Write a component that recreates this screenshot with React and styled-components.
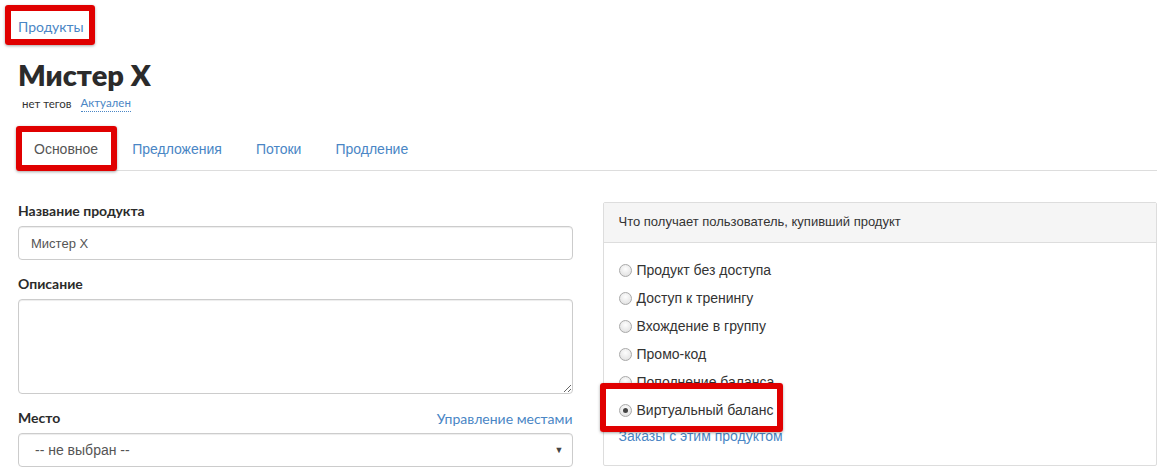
import React from 'react';
import styled, { createGlobalStyle } from 'styled-components';

const GlobalStyle = createGlobalStyle`
  html, body {
    margin: 0;
    padding: 0;
    background: #fff;
  }
  body {
    font-family: "Liberation Sans", Arial, sans-serif;
    font-size: 14px;
    color: #333;
  }
  * { box-sizing: border-box; }
`;

const Page = styled.div`
  padding: 17px 14px 0 18px;
`;

// red annotation frame drawn over the marked element
const Marked = styled.span`
  position: relative;
  display: inline-block;
  align-self: flex-start;
  &::after {
    content: "";
    position: absolute;
    top: ${p => p.$t}px;
    left: ${p => p.$l}px;
    right: ${p => p.$r}px;
    bottom: ${p => p.$b}px;
    border: 6px solid #e00000;
    border-radius: 3px;
    box-shadow: 0 1px 3px rgba(0, 0, 0, 0.35);
    pointer-events: none;
  }
`;

const Crumb = styled.a`
  font-family: Lato, "Open Sans", sans-serif;
  font-size: 14px;
  line-height: 20px;
  color: #4a86c5;
  text-decoration: none;
`;

const Title = styled.h1`
  margin: 21px 0 0;
  font-family: Lato, "Open Sans", sans-serif;
  font-weight: 800;
  font-size: 29px;
  line-height: 34px;
  color: #2b2b2b;
`;

const Tags = styled.div`
  margin-top: 4px;
  display: flex;
  gap: 9px;
  padding-left: 4px;
  font-family: Lato, "Open Sans", sans-serif;
  font-size: 11.5px;
  line-height: 16px;
`;

const Status = styled.span`
  color: #4a86c5;
  border-bottom: 1px dotted #4a86c5;
  line-height: 14px;
`;

const Tabs = styled.nav`
  margin-top: 16px;
  display: flex;
  border-bottom: 1px solid #ddd;
`;

const Tab = styled.a`
  display: block;
  padding: 10px 15px 11px;
  margin-right: 2px;
  margin-bottom: -1px;
  line-height: 20px;
  font-size: 14px;
  text-decoration: none;
  color: ${p => (p.$active ? '#555' : '#4a86c5')};
  border: 1px solid ${p => (p.$active ? '#ddd' : 'transparent')};
  border-bottom-color: ${p => (p.$active ? '#fff' : 'transparent')};
  border-radius: 4px 4px 0 0;
  background: ${p => (p.$active ? '#fff' : 'transparent')};
`;

const Columns = styled.div`
  margin-top: 30px;
  display: grid;
  grid-template-columns: 1fr 1fr;
  gap: 30px;
  align-items: start;
`;

const Group = styled.div`
  margin-bottom: 14px;
`;

const LabelRow = styled.div`
  display: flex;
  justify-content: space-between;
  align-items: center;
  margin-bottom: 5px;
`;

const Label = styled.label`
  font-family: Lato, "Open Sans", sans-serif;
  font-weight: 700;
  font-size: 14px;
  line-height: 20px;
  color: #2b2b2b;
`;

const SideLink = styled.a`
  font-family: Lato, "Open Sans", sans-serif;
  font-size: 14px;
  color: #4a86c5;
  text-decoration: none;
`;

const Input = styled.input`
  display: block;
  width: 100%;
  height: 34px;
  padding: 6px 12px;
  font-family: "Liberation Sans", Arial, sans-serif;
  font-size: 13px;
  color: #555;
  border: 1px solid #ccc;
  border-radius: 4px;
  box-shadow: inset 0 1px 1px rgba(0, 0, 0, 0.075);
  outline: none;
`;

const TextArea = styled.textarea`
  display: block;
  width: 100%;
  height: 95px;
  margin-top: 1px;
  padding: 6px 12px;
  font-family: "Liberation Sans", Arial, sans-serif;
  font-size: 13px;
  border: 1px solid #ccc;
  border-radius: 4px;
  box-shadow: inset 0 1px 1px rgba(0, 0, 0, 0.075);
  resize: vertical;
  outline: none;
`;

const Select = styled.div`
  display: flex;
  justify-content: space-between;
  align-items: center;
  height: 34px;
  padding: 0 8px 0 16px;
  font-size: 14px;
  color: #555;
  border: 1px solid #ccc;
  border-radius: 4px;
  box-shadow: inset 0 1px 1px rgba(0, 0, 0, 0.075);
`;

const Arrow = styled.span`
  font-size: 9px;
  color: #444;
`;

const Panel = styled.div`
  margin-top: 1px;
  border: 1px solid #ddd;
  border-radius: 2px;
`;

const PanelHead = styled.div`
  padding: 9px 15px 10px;
  line-height: 20px;
  font-size: 13px;
  color: #333;
  background: #f5f5f5;
  border-bottom: 1px solid #ddd;
`;

const PanelBody = styled.div`
  padding: 17px 15px 19px;
  display: flex;
  flex-direction: column;
  gap: 8px;
`;

const Radio = styled.label`
  display: flex;
  align-items: center;
  gap: 5px;
  line-height: 20px;
  font-size: 14px;
  color: #333;
`;

const Dot = styled.span`
  width: 13px;
  height: 13px;
  border-radius: 50%;
  border: 1px solid #a9a9a9;
  background: radial-gradient(circle at 50% 35%, #fdfdfd 0%, #e6e6e6 70%, #d6d6d6 100%);
  display: flex;
  align-items: center;
  justify-content: center;
  &::after {
    content: "";
    width: 5px;
    height: 5px;
    border-radius: 50%;
    background: ${p => (p.$checked ? '#444' : 'transparent')};
  }
`;

const OrdersLink = styled.a`
  margin-top: -2px;
  line-height: 20px;
  font-size: 14px;
  color: #4a86c5;
  text-decoration: none;
`;

const options = [
  'Продукт без доступа',
  'Доступ к тренингу',
  'Вхождение в группу',
  'Промо-код',
  'Пополнение баланса',
];

export default function App() {
  return (
    <Page>
      <GlobalStyle />
      <Marked $t={-12} $l={-13} $r={-11} $b={-8}>
        <Crumb href="#">Продукты</Crumb>
      </Marked>
      <Title>Мистер X</Title>
      <Tags>
        <span>нет тегов</span>
        <Status>Актуален</Status>
      </Tags>
      <Tabs>
        <Marked $t={-2} $l={-2} $r={-1} $b={-1}>
          <Tab href="#" $active>Основное</Tab>
        </Marked>
        <Tab href="#">Предложения</Tab>
        <Tab href="#">Потоки</Tab>
        <Tab href="#">Продление</Tab>
      </Tabs>
      <Columns>
        <div>
          <Group>
            <LabelRow><Label>Название продукта</Label></LabelRow>
            <Input defaultValue="Мистер X" />
          </Group>
          <Group>
            <LabelRow><Label>Описание</Label></LabelRow>
            <TextArea />
          </Group>
          <Group>
            <LabelRow>
              <Label>Место</Label>
              <SideLink href="#">Управление местами</SideLink>
            </LabelRow>
            <Select>
              <span>-- не выбран --</span>
              <Arrow>▼</Arrow>
            </Select>
          </Group>
        </div>
        <Panel>
          <PanelHead>Что получает пользователь, купивший продукт</PanelHead>
          <PanelBody>
            {options.map(o => (
              <Radio key={o}>
                <Dot />
                {o}
              </Radio>
            ))}
            <Marked $t={-17} $l={-19} $r={-10} $b={-12}>
              <Radio>
                <Dot $checked />
                Виртуальный баланс
              </Radio>
            </Marked>
            <OrdersLink href="#">Заказы с этим продуктом</OrdersLink>
          </PanelBody>
        </Panel>
      </Columns>
    </Page>
  );
}
